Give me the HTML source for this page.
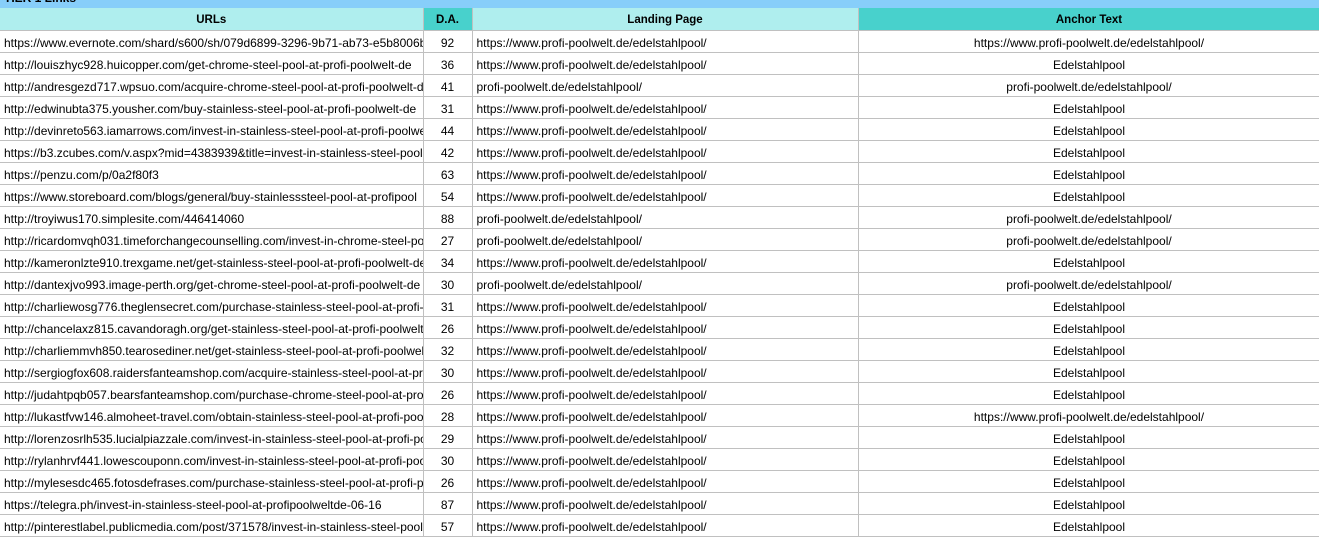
<!DOCTYPE html>
<html><head><meta charset="utf-8"><style>
html,body{margin:0;padding:0;width:1319px;height:524px;overflow:hidden;background:#fff;font-family:"Liberation Sans",Arial,sans-serif;font-size:12px;color:#000}
#top{position:absolute;left:0;top:0;width:1319px;height:8px;background:#87cefa;overflow:hidden}
#top span{position:absolute;left:4px;top:-9px;font-weight:bold;font-size:12px}
table{position:absolute;left:0;top:8px;border-collapse:collapse;table-layout:fixed;width:1320px}
td,th{height:21px;padding:3px 4px 0 4px;box-sizing:border-box;border:1px solid #c0c0c0;white-space:nowrap;overflow:hidden;text-overflow:clip;line-height:18px}
th{font-size:11.5px;font-weight:bold;border-top:none}
td:first-child,th:first-child{border-left:none}
.p{background:#afeeee}.m{background:#48d1cc}
td.c{text-align:center}
</style></head><body>
<div id="top"><span>TIER 1 Links</span></div>
<table>
<colgroup><col style="width:423px"><col style="width:49px"><col style="width:386px"><col style="width:462px"></colgroup>
<tr style="height:22px"><th class="p">URLs</th><th class="m">D.A.</th><th class="p">Landing Page</th><th class="m">Anchor Text</th></tr>
<tr><td>https://www.evernote.com/shard/s600/sh/079d6899-3296-9b71-ab73-e5b8006b95</td><td class="c">92</td><td>https://www.profi-poolwelt.de/edelstahlpool/</td><td class="c">https://www.profi-poolwelt.de/edelstahlpool/</td></tr>
<tr><td>http://louiszhyc928.huicopper.com/get-chrome-steel-pool-at-profi-poolwelt-de</td><td class="c">36</td><td>https://www.profi-poolwelt.de/edelstahlpool/</td><td class="c">Edelstahlpool</td></tr>
<tr><td>http://andresgezd717.wpsuo.com/acquire-chrome-steel-pool-at-profi-poolwelt-de</td><td class="c">41</td><td>profi-poolwelt.de/edelstahlpool/</td><td class="c">profi-poolwelt.de/edelstahlpool/</td></tr>
<tr><td>http://edwinubta375.yousher.com/buy-stainless-steel-pool-at-profi-poolwelt-de</td><td class="c">31</td><td>https://www.profi-poolwelt.de/edelstahlpool/</td><td class="c">Edelstahlpool</td></tr>
<tr><td>http://devinreto563.iamarrows.com/invest-in-stainless-steel-pool-at-profi-poolwelt</td><td class="c">44</td><td>https://www.profi-poolwelt.de/edelstahlpool/</td><td class="c">Edelstahlpool</td></tr>
<tr><td>https://b3.zcubes.com/v.aspx?mid=4383939&amp;title=invest-in-stainless-steel-pool-</td><td class="c">42</td><td>https://www.profi-poolwelt.de/edelstahlpool/</td><td class="c">Edelstahlpool</td></tr>
<tr><td>https://penzu.com/p/0a2f80f3</td><td class="c">63</td><td>https://www.profi-poolwelt.de/edelstahlpool/</td><td class="c">Edelstahlpool</td></tr>
<tr><td>https://www.storeboard.com/blogs/general/buy-stainlesssteel-pool-at-profipool</td><td class="c">54</td><td>https://www.profi-poolwelt.de/edelstahlpool/</td><td class="c">Edelstahlpool</td></tr>
<tr><td>http://troyiwus170.simplesite.com/446414060</td><td class="c">88</td><td>profi-poolwelt.de/edelstahlpool/</td><td class="c">profi-poolwelt.de/edelstahlpool/</td></tr>
<tr><td>http://ricardomvqh031.timeforchangecounselling.com/invest-in-chrome-steel-pool</td><td class="c">27</td><td>profi-poolwelt.de/edelstahlpool/</td><td class="c">profi-poolwelt.de/edelstahlpool/</td></tr>
<tr><td>http://kameronlzte910.trexgame.net/get-stainless-steel-pool-at-profi-poolwelt-de</td><td class="c">34</td><td>https://www.profi-poolwelt.de/edelstahlpool/</td><td class="c">Edelstahlpool</td></tr>
<tr><td>http://dantexjvo993.image-perth.org/get-chrome-steel-pool-at-profi-poolwelt-de</td><td class="c">30</td><td>profi-poolwelt.de/edelstahlpool/</td><td class="c">profi-poolwelt.de/edelstahlpool/</td></tr>
<tr><td>http://charliewosg776.theglensecret.com/purchase-stainless-steel-pool-at-profi-p</td><td class="c">31</td><td>https://www.profi-poolwelt.de/edelstahlpool/</td><td class="c">Edelstahlpool</td></tr>
<tr><td>http://chancelaxz815.cavandoragh.org/get-stainless-steel-pool-at-profi-poolwelt-</td><td class="c">26</td><td>https://www.profi-poolwelt.de/edelstahlpool/</td><td class="c">Edelstahlpool</td></tr>
<tr><td>http://charliemmvh850.tearosediner.net/get-stainless-steel-pool-at-profi-poolwelt</td><td class="c">32</td><td>https://www.profi-poolwelt.de/edelstahlpool/</td><td class="c">Edelstahlpool</td></tr>
<tr><td>http://sergiogfox608.raidersfanteamshop.com/acquire-stainless-steel-pool-at-profi</td><td class="c">30</td><td>https://www.profi-poolwelt.de/edelstahlpool/</td><td class="c">Edelstahlpool</td></tr>
<tr><td>http://judahtpqb057.bearsfanteamshop.com/purchase-chrome-steel-pool-at-profi</td><td class="c">26</td><td>https://www.profi-poolwelt.de/edelstahlpool/</td><td class="c">Edelstahlpool</td></tr>
<tr><td>http://lukastfvw146.almoheet-travel.com/obtain-stainless-steel-pool-at-profi-pool</td><td class="c">28</td><td>https://www.profi-poolwelt.de/edelstahlpool/</td><td class="c">https://www.profi-poolwelt.de/edelstahlpool/</td></tr>
<tr><td>http://lorenzosrlh535.lucialpiazzale.com/invest-in-stainless-steel-pool-at-profi-pool</td><td class="c">29</td><td>https://www.profi-poolwelt.de/edelstahlpool/</td><td class="c">Edelstahlpool</td></tr>
<tr><td>http://rylanhrvf441.lowescouponn.com/invest-in-stainless-steel-pool-at-profi-pool</td><td class="c">30</td><td>https://www.profi-poolwelt.de/edelstahlpool/</td><td class="c">Edelstahlpool</td></tr>
<tr><td>http://mylesesdc465.fotosdefrases.com/purchase-stainless-steel-pool-at-profi-p</td><td class="c">26</td><td>https://www.profi-poolwelt.de/edelstahlpool/</td><td class="c">Edelstahlpool</td></tr>
<tr><td>https://telegra.ph/invest-in-stainless-steel-pool-at-profipoolweltde-06-16</td><td class="c">87</td><td>https://www.profi-poolwelt.de/edelstahlpool/</td><td class="c">Edelstahlpool</td></tr>
<tr><td>http://pinterestlabel.publicmedia.com/post/371578/invest-in-stainless-steel-pool</td><td class="c">57</td><td>https://www.profi-poolwelt.de/edelstahlpool/</td><td class="c">Edelstahlpool</td></tr>
</table>
</body></html>
